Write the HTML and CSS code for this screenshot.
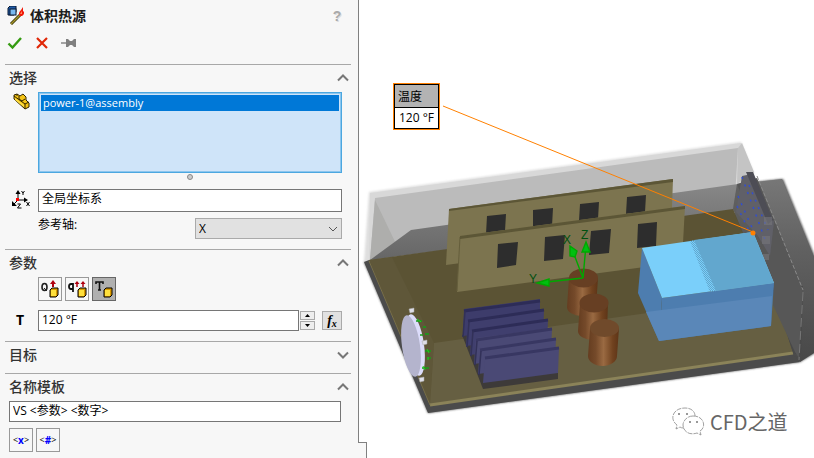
FILE: index.html
```html
<!DOCTYPE html>
<html lang="zh-CN">
<head>
<meta charset="utf-8">
<meta name="viewport" content="width=device-width, initial-scale=1">
<title>体积热源</title>
<link rel="stylesheet" href="styles.css">
</head>
<body>
<div class="app">
  <form class="panel">
    <header class="panel-head">
      <div class="title-row">
        <svg class="title-icon" width="18" height="20" viewBox="0 0 18 20" aria-hidden="true">
          <path d="M1 2l2-2h6v6l-2 3H1z" fill="#1d5ba8" stroke="#0a1830"/>
          <rect x="3" y="3" width="6" height="6" fill="#78b8f0" stroke="#0a1830"/>
          <path d="M4 18L13 9" stroke="#333000" stroke-width="3"/>
          <path d="M4 18L13 9" stroke="#a6962c" stroke-width="1.5"/>
          <path d="M13 10c-2-2-1-4 1-6l2-3 0 4c2 1 1 4-1 5z" fill="#f01808"/>
          <path d="M13 8l2-3v3z" fill="#ff8a60"/>
        </svg>
        <h1>体积热源</h1>
        <button type="button" class="plain help" aria-label="帮助">?</button>
      </div>
      <div class="actions">
        <button type="submit" class="plain" aria-label="确定"><svg width="16" height="14" viewBox="0 0 16 14"><path d="M1.500 7.500L5.500 11.500L14 2" fill="none" stroke="#359b12" stroke-width="2.400"/></svg></button>
        <button type="reset" class="plain" aria-label="取消"><svg width="12" height="12" viewBox="0 0 12 12"><path d="M1 1l10 10M11 1L1 11" fill="none" stroke="#e02808" stroke-width="2.200"/></svg></button>
        <button type="button" class="plain pin" aria-label="保持可见"><svg width="15" height="10" viewBox="0 0 15 10"><path d="M0 5h6" stroke="#808080" stroke-width="1.400"/><path d="M5 1h2l2 2h2l2-2h2v8h-2l-2-2H9L7 9H5z" fill="#808080"/></svg></button>
      </div>
    </header>

    <section class="group">
      <h2>选择<svg class="chev" viewBox="0 0 12 8"><path d="M1 6.500l5-5 5 5"/></svg></h2>
      <div class="row">
        <svg class="row-icon" width="17" height="17" viewBox="0 0 17 17" aria-hidden="true">
          <path d="M1 2l3-1 3 2 3-2 3 3v3l3 3v4l-4 2L1 6z" fill="#f5c414" stroke="#302400"/>
          <path d="M1 3l11 8 4-2M12 11v5M6 3v3l3 2 3-2M4 1v2" fill="none" stroke="#302400"/>
          <path d="M2 5l9 7v2L2 7z" fill="#ffdf45"/>
        </svg>
        <ul class="listbox" role="listbox" aria-label="选择"><li role="option" aria-selected="true">power-1@assembly</li></ul>
      </div>
      <div class="grip"><i class="dot"></i></div>
      <div class="row">
        <svg class="row-icon mid" width="20" height="20" viewBox="0 0 20 20" aria-hidden="true">
          <path d="M7 10V2M7 10h8M7 10l-5 5" stroke="#000" fill="none"/>
          <path d="M4.500 4L7 0l2.500 4zM13 7.500l4 2.500-4 2.500zM1 11v5h5z"/>
          <rect x="5" y="8" width="3" height="3" fill="#f00"/>
          <path d="M10.500 1l1.500 2 1.500-2M12 3v2M15.500 12l3 4M18.500 12l-3 4M6.500 14h3l-3 4h4" fill="none" stroke="#000"/>
        </svg>
        <input class="field tall" aria-label="坐标系" value="全局坐标系">
      </div>
      <div class="row axis">
        <label for="axis">参考轴:</label>
        <div class="combo">
          <select id="axis"><option>X</option><option>Y</option><option>Z</option></select>
          <svg width="10" height="6" viewBox="0 0 10 6"><path d="M1 1l4 4 4-4"/></svg>
        </div>
      </div>
    </section>

    <section class="group">
      <h2>参数<svg class="chev" viewBox="0 0 12 8"><path d="M1 6.500l5-5 5 5"/></svg></h2>
      <div class="tools indent">
        <button type="button" class="tool" aria-label="热生成率"><svg width="22" height="22" viewBox="0 0 22 22"><ellipse cx="5.500" cy="9" rx="2.500" ry="3.500" fill="none" stroke="#222" stroke-width="1.600"/><path d="M5 10l3 3" stroke="#222"/><path d="M14 9V4" stroke="#b00010" stroke-width="2"/><path d="M11 6l3-4 3 4z" fill="#b00010"/><path d="M11 12l2-2h6v7l-2 2h-6z" fill="#d99a00" stroke="#000"/><rect x="12" y="12" width="5" height="6" fill="#ffe03c"/></svg></button>
        <button type="button" class="tool" aria-label="单位体积热生成率"><svg width="22" height="22" viewBox="0 0 22 22"><path d="M7 5v9M7 6H5Q3 6 3 8.500T5 11h2" fill="none" stroke="#111" stroke-width="1.800"/><path d="M11 9V4M17 9V4" stroke="#b00010" stroke-width="1.500"/><path d="M8.500 6L11 3l2.500 3zM14.500 6L17 3l2.500 3z" fill="#b00010"/><path d="M12 12l2-2h6v7l-2 2h-6z" fill="#d99a00" stroke="#000"/><rect x="13" y="12" width="5" height="6" fill="#ffe03c"/></svg></button>
        <button type="button" class="tool on" aria-label="温度" aria-pressed="true"><svg width="22" height="22" viewBox="0 0 22 22"><path d="M3 6V4h7v2M6.500 4v8M5 12h3" fill="none" stroke="#111" stroke-width="1.600"/><path d="M11 12l2-2h6v7l-2 2h-6z" fill="#d99a00" stroke="#000"/><rect x="12" y="12" width="5" height="6" fill="#ffe03c"/></svg></button>
      </div>
      <div class="row value">
        <label class="tee" for="temp">T</label>
        <input class="field" id="temp" value="120 °F">
        <div class="spin">
          <button type="button" aria-label="增加"><svg width="5" height="3" viewBox="0 0 5 3"><path d="M0 3L2.500 0 5 3z"/></svg></button>
          <button type="button" aria-label="减少"><svg width="5" height="3" viewBox="0 0 5 3"><path d="M0 0l2.500 3L5 0z"/></svg></button>
        </div>
        <button type="button" class="fx" aria-label="相关性">f<sub>x</sub></button>
      </div>
    </section>

    <section class="group closed">
      <h2>目标<svg class="chev" viewBox="0 0 12 8"><path d="M1 1.500l5 5 5-5"/></svg></h2>
    </section>

    <section class="group">
      <h2>名称模板<svg class="chev" viewBox="0 0 12 8"><path d="M1 6.500l5-5 5 5"/></svg></h2>
      <div class="template">
        <input class="field" aria-label="名称模板" value="VS &lt;参数&gt; &lt;数字&gt;">
        <div class="tools">
          <button type="button" class="tool code">&lt;<b>x</b>&gt;</button>
          <button type="button" class="tool code">&lt;<b>#</b>&gt;</button>
        </div>
      </div>
    </section>
    <div class="tab"><i class="dot"></i></div>
  </form>

  <main class="view">
    <svg class="scene" viewBox="359 0 455 458" role="img" aria-label="装配体模型">
      <defs>
        <linearGradient id="copper"><stop offset="0" stop-color="#653d20"/><stop offset=".25" stop-color="#754a2a"/><stop offset=".5" stop-color="#9a6a42"/><stop offset=".8" stop-color="#70421f"/><stop offset="1" stop-color="#5d3417"/></linearGradient>
        <linearGradient id="shade" x1="0" y1="0" x2="0" y2="1"><stop offset="0" stop-color="#777"/><stop offset=".4" stop-color="#606060"/><stop offset="1" stop-color="#484848"/></linearGradient>
        <linearGradient id="back" x1="0" y1="0" x2="0" y2="1"><stop offset="0" stop-color="#878787"/><stop offset="1" stop-color="#666"/></linearGradient>
        <pattern id="dither" width="2" height="2" patternUnits="userSpaceOnUse"><rect width="1" height="1" fill="#62a7ce"/><rect x="1" y="1" width="1" height="1" fill="#62a7ce"/></pattern>
        <filter id="soft"><feGaussianBlur stdDeviation="1"/></filter>
      </defs>
      <!-- enclosure and cast shadow -->
      <path d="M737 184L783 179 815 257V353L800 362 428 413 364 262z" fill="#4b4b4b" filter="url(#soft)"/>
      <path d="M369 192L741 142 754 173 738 212 372 262 364 262z" fill="#dedede" filter="url(#soft)"/>
      <path d="M370 193L741 143 754 173 738 212 369 260z" fill="#d8d8d8"/>
      <path d="M375 198L738 148 734 212 370 260z" fill="#bbb"/>
      <path d="M375 200L399 250 370 260z" fill="#aeaeac"/>
      <path d="M370 260L411 230 738 184 734 212z" fill="url(#back)"/>
      <path d="M737 184L782 179 814 257V353L800 362 793 353 733 209z" fill="url(#shade)"/>
      <path d="M738 148L742 143 754 172 737 184z" fill="#c4c4c4"/>
      <path d="M737 184L803 290 799 362 793 353 733 209z" fill="#4d4d4d" opacity=".5"/>
      <!-- floor -->
      <path d="M369 260L733 209 793 353 430 404z" fill="#5b5334"/>
      <path d="M369 260L392 257 434 343 430 404z" fill="#5f5739"/>
      <path d="M434 343L776 295 793 353 430 404z" fill="#665f42"/>
      <path d="M364 262L369 260 430 406 793 354 800 362 428 413z" fill="#4b4b4b"/>
      <path d="M430 405L793 353" stroke="#8b8359" stroke-width="3"/>
      <path d="M369 261L430 405" stroke="#796f47"/>
      <path d="M773 290L803 286 801 355 793 353z" fill="#494949"/>
      <!-- right wall and inlet grille -->
      <path d="M737 184L756 232 774 283 773 305 795 352 799 358 803 290 757 178z" fill="#575757"/>
      <path d="M742 176l10-2 22 48-4 34-12-20-22-24z" fill="#606068"/>
      <path d="M746 172h7l20 48-5 4z" fill="#4d4d55"/>
      <path d="M757 176L803 290" stroke="#8a8a8a" stroke-dasharray="4 2"/>
      <path d="M803 292L799 360" stroke="#777" stroke-dasharray="9 4"/>
      <g fill="none" stroke="#324ed0" stroke-width="1.500" stroke-dasharray="2 6"><path d="M742 177L766 242M738 196L757 239M737 206L749 231M749 185L768 230"/></g>
      <g fill="#77777c"><path d="M764 217h8v8h-8zM762 236h8v8h-8zM763 254h6v6h-6z" opacity=".6"/></g>
      <!-- circuit boards -->
      <path d="M449 209L673 179 671 235 446 265z" fill="#7c744f"/>
      <path d="M449 209L673 179v3L449 211z" fill="#5c5636"/>
      <g fill="#2d2d2d"><path d="M487 216l19-2-1 17-19 3zM533 210l20-2-1 18-19 2zM580 204l19-2-1 17-19 2zM627 197l19-2-1 17-19 2z"/></g>
      <path d="M460 236L685 206 682 262 457 292z" fill="#7c744f"/>
      <path d="M460 237L457 291" stroke="#655e3c"/>
      <path d="M460 236L685 206v3L460 239z" fill="#5c5636"/>
      <g fill="#2d2d2d"><path d="M498 244l20-2-2 23-19 3zM545 237l20-2-2 24-19 2zM591 231l20-2-2 24-20 2zM638 224l19-2-1 24-19 2z"/></g>
      <!-- heat sink -->
      <path d="M462 335L540 325 558 373V379L483 389z" fill="#3d3a39"/>
      <g stroke-linejoin="round">
        <path d="M464 309l76-10v27l-77 10z" fill="#3d3c6b"/><path d="M464 311l76-10" stroke="#2d2c57" stroke-width="3"/>
        <path d="M468 320l76-10-1 26-77 10z" fill="#3f3e6d"/><path d="M468 321l76-11" stroke="#2d2c57" stroke-width="3"/>
        <path d="M472 329l76-10-1 26-77 10z" fill="#403f6e"/><path d="M472 331l76-11" stroke="#2d2c57" stroke-width="3"/>
        <path d="M476 338l76-10-1 26-77 10z" fill="#4a4975"/><path d="M476 340l76-11" stroke="#383762" stroke-width="3"/>
        <path d="M480 348l76-10-1 26-77 10z" fill="#4a4975"/><path d="M480 350l76-11" stroke="#383762" stroke-width="3"/>
        <path d="M485 357l74-10-1 26-75 10z" fill="#4a4975"/><path d="M485 358l74-10" stroke="#383762" stroke-width="3"/>
      </g>
      <path d="M465 311l-2 26M469 322l-2 25M473 331l-2 25M477 341l-2 24M481 351l-2 24" stroke="#323158" stroke-width="1.500"/>
      <!-- capacitors -->
      <g><path d="M569 278l-2 29a14.500 9 0 0 0 29 0l2-29z" fill="url(#copper)"/><ellipse cx="583.500" cy="278" rx="14.500" ry="9.500" fill="#673f23"/></g>
      <g><path d="M580 303l-2 28a14.500 9 0 0 0 29 0l1-28z" fill="url(#copper)"/><ellipse cx="594" cy="303" rx="14.500" ry="9.500" fill="#673f23"/></g>
      <g><path d="M590 328l-2 28a14.500 10 0 0 0 29 0l2-28z" fill="url(#copper)"/><ellipse cx="604.500" cy="328" rx="14.500" ry="9" fill="#704a2b"/></g>
      <!-- coordinate triad -->
      <g stroke="#00a800" stroke-width="1.400" fill="#00c010"><path d="M583 278L538 283M583 278L572 249M583 278L586 245"/><path d="M537 283l12-4v7zM570 246l7 5-2 6-5-1zM586 242l-4 10h8z"/></g>
      <g class="axes"><text x="529" y="283">Y</text><text x="563" y="244">X</text><text x="581" y="239">Z</text></g>
      <!-- power block -->
      <path d="M642 248L662 298 659 341 638 293z" fill="#4d7daf"/>
      <path d="M662 298L774 283 771 326 659 341z" fill="#4d7daf"/>
      <path d="M646 312L772 296 771 326 659 341z" fill="#5a87b8"/>
      <path d="M642 248L753 232 774 283 662 298z" fill="#7acffa"/>
      <path d="M694 240L753 232 774 283 716 291z" fill="#62a7ce"/>
      <path d="M690 241L694 240 717 291 710 292z" fill="url(#dither)"/>
      <!-- fan -->
      <ellipse cx="415" cy="345" rx="9" ry="31" fill="#dcdcfa" transform="rotate(-8 415 345)"/>
      <ellipse cx="411" cy="346" rx="9" ry="31" fill="#b4b4cd" transform="rotate(-8 411 346)"/>
      <g fill="#dedee8" stroke="#aaa" stroke-width=".5"><path d="M409 309l5-1v4l-4 1zM422 341l5-1v4l-4 1zM419 378l5-1v4l-4 1z"/></g>
      <path d="M416 321h6M423 327h3M420 335h3M425 334h4M425 351h6M427 358h4M422 368h7" stroke="#16a016" stroke-width="1.600"/>
      <path d="M417 319l4 3M427 349l2 4M423 366l2 4M428 357v3" stroke="#20d020"/>
      <path d="M443 106L753 232" stroke="#ff8000" stroke-width="1"/><circle cx="753" cy="233" r="2.500" fill="#ff8000"/>
      <!-- publisher mark -->
      <g fill="none" stroke="#888" stroke-width=".8" stroke-dasharray="5 1"><path d="M684 428q-3 0-4-1l-4 2 1-4c-8-6-4-17 8-17 7 0 10 4 10 8"/><path d="M693 416c12 0 13 12 7 15l1 4-4-2c-9 3-14-3-14-8 0-4 4-9 10-9z"/></g>
      <g fill="#777"><circle cx="679" cy="414" r="1"/><circle cx="687" cy="414" r="1"/><circle cx="690" cy="422" r="1"/><circle cx="697" cy="422" r="1"/></g>
      <text class="mark" x="710" y="430">CFD之道</text>
    </svg>
    <dl class="callout"><dt>温度</dt><dd>120 °F</dd></dl>
  </main>
</div>
</body>
</html>
```

FILE: styles.css
```css
* { box-sizing: border-box; }
body {
  margin: 0;
  background: #fff;
  color: #000;
  font: 12px/16px "Open Sans", "Noto Sans CJK SC", sans-serif;
}
button, input, select { font: inherit; color: inherit; margin: 0; border-radius: 0; }
button { padding: 0; display: flex; align-items: center; justify-content: center; }
svg { display: block; flex: none; }

.app { display: grid; grid-template-columns: 359px minmax(0, 1fr); min-height: 100vh; }
.panel { position: relative; z-index: 1; background: #f7f7f7; border-right: 1px solid #808080; }

.panel-head { padding: 0 16px 10px 7px; }
.title-row { display: flex; align-items: center; height: 32px; gap: 5px; }
.title-row h1 { flex: 1; margin: 0; padding-bottom: 2px; font: bold 14px/20px "Noto Sans CJK SC", sans-serif; color: #1c1c1c; }
.plain { border: 0; background: none; }
.help { width: 10px; color: #aaa; font: bold 14px/16px "Liberation Sans", sans-serif; text-shadow: 1px 1px #ddd; }
.actions { display: flex; align-items: center; height: 22px; gap: 13px; }

.group { margin: 0 7px 0 5px; border-top: 1px solid #a8a8a8; padding: 0 9px 10px 0; }
.closed { padding-bottom: 4px; }
.group h2 {
  display: flex; align-items: center; justify-content: space-between;
  height: 27px; margin: 0 -7px 0 0; padding: 0 0 3px 4px;
  font: 500 14px/20px "Noto Sans CJK SC", sans-serif; color: #333;
}
.chev { width: 12px; height: 8px; margin-top: 2px; }
.chev path { fill: none; stroke: #777; stroke-width: 2; }

.row { display: grid; grid-template-columns: 33px minmax(0, 1fr); }
.row-icon { margin: 1px 0 0 8px; }
.row-icon.mid { margin-left: 6px; }
.listbox {
  list-style: none; margin: 0; padding: 1px; height: 81px;
  border: 1px solid #4ba7e0; outline: 1px solid #8cc6ee; outline-offset: -2px;
  background: #cfe4f9;
}
.listbox li { margin: 1px; padding: 0 2px 1px; background: #0078d7; color: #fff; font-size: 11px; line-height: 15px; }
.grip { display: flex; justify-content: center; height: 16px; padding: 1px 0 0 33px; }
.dot { width: 6px; height: 6px; border: 1px solid #888; border-radius: 50%; background: #ccc; }
.field { width: 100%; min-width: 0; height: 21px; padding: 0 3px 3px; border: 1px solid #767676; background: #fff; }
.field.tall { height: 23px; padding-bottom: 5px; }
.axis { grid-template-columns: minmax(0, 1fr) 147px; margin-top: 6px; }
.axis label { padding-left: 33px; line-height: 13px; }
.combo { position: relative; }
.combo select { display: block; width: 100%; height: 21px; padding: 0 3px; border: 1px solid #aaa; background: #e1e1e1; appearance: none; }
.combo svg { position: absolute; right: 4px; top: 8px; pointer-events: none; }
.combo path { fill: none; stroke: #555; stroke-width: 1; }

.tools { display: flex; gap: 3px; }
.indent { padding-left: 33px; }
.tool { width: 24px; height: 24px; border: 1px solid #999; background: #f7f7f7; }
.tool.on { background: #b0b0b0; border-color: #666; }
.code { font: 9px/12px "Open Sans", sans-serif; }
.code b { color: #00f; font-size: 10px; }
.value { grid-template-columns: 33px minmax(0, 1fr) 16px 27px; margin-top: 9px; }
.tee { padding-left: 11px; font: bold 14px/20px "Open Sans", sans-serif; }
.spin { display: grid; gap: 1px; margin-left: 1px; padding: 1px 0; }
.spin button { border: 1px solid #aaa; background: #eee; }
.fx { height: 19px; margin: 1px 0 0 7px; border: 1px solid #aaa; background: #e1e1e1; font: italic bold 14px/14px "Liberation Serif", serif; }
.fx sub { font-size: 10px; line-height: 10px; align-self: flex-end; }

.template { display: grid; gap: 6px; padding-left: 4px; margin-right: 1px; }

.tab { position: absolute; right: -9px; bottom: 0; width: 9px; height: 20px; border: solid #808080; border-width: 1px 1px 0 0; background: #f7f7f7; overflow: hidden; }
.tab .dot { position: absolute; left: 1px; bottom: -2px; }

.view { position: relative; }
.scene { width: 100%; height: auto; }
.axes { font: 12px "Liberation Sans", sans-serif; fill: #005010; }
.mark { font: 400 20px "Noto Sans CJK SC", sans-serif; fill: #666; }
.callout {
  position: absolute; left: 34px; top: 83px; margin: 0;
  border: 1px solid #ff8000; outline: 1px solid #000; outline-offset: -2px; padding: 1px;
  font: 12px/20px "Open Sans", "Noto Sans CJK SC", sans-serif; background: #fff;
}
.callout dt { padding: 0 3px; background: #b3b3b3; border-bottom: 1px solid #000; height: 23px; line-height: 23px; }
.callout dd { margin: 0; padding: 0 4px; }
```
